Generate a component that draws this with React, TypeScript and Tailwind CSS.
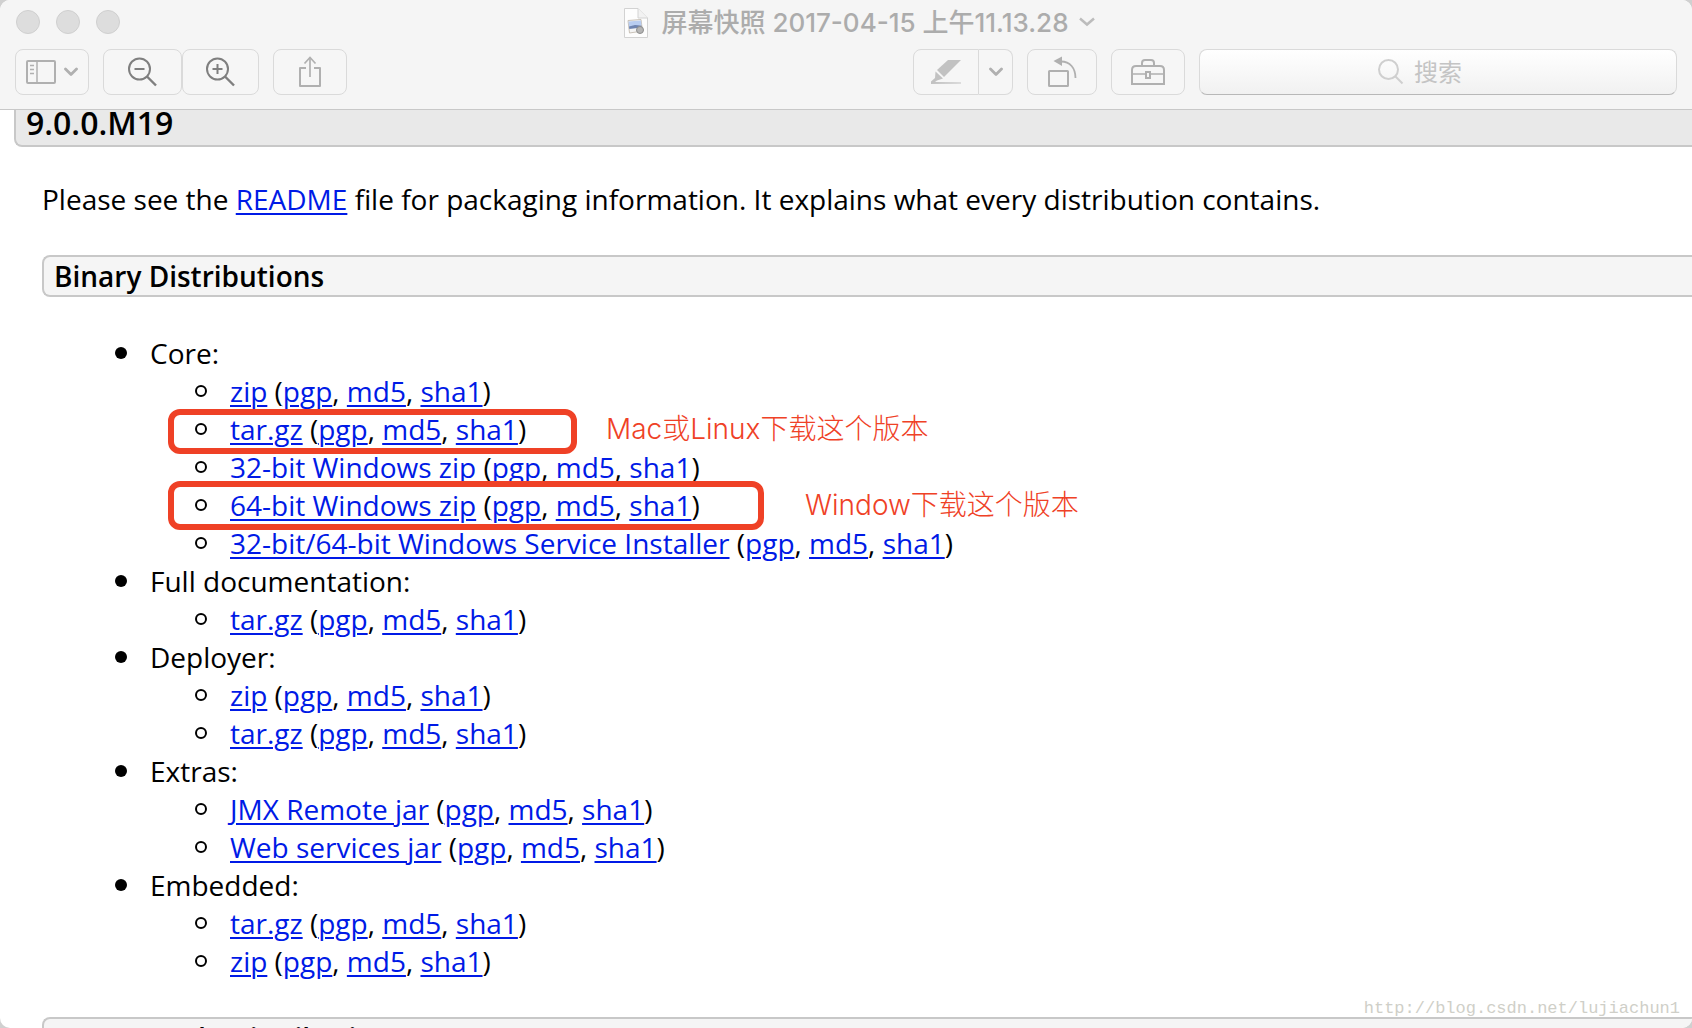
import type { ReactNode } from "react"
import clsx from "clsx"

const toolButtonClass = "flex h-[46px] items-center justify-center rounded-lg border border-[#dadada] bg-[#f6f6f6]"
const linkClass = "text-[#001ae6] underline decoration-2 underline-offset-[3px]"
const noteClass = "pointer-events-none absolute top-0 whitespace-nowrap font-['Inter','Noto_Sans_CJK_SC',sans-serif] font-light text-[#ef4126]"
const frameClass = "pointer-events-none absolute -left-[27px] rounded-xl border-6 border-[#ef4126]"

interface Download {
    name: string
    frame?: string
    note?: string
    notePosition?: string
}

interface Group {
    title: string
    downloads: Download[]
}

const groups: Group[] = [
    {
        title: "Core:",
        downloads: [
            { name: "zip" },
            { name: "tar.gz", frame: "-top-px h-[45px] w-[409px]", note: "Mac或Linux下载这个版本", notePosition: "left-[411px]" },
            { name: "32-bit Windows zip" },
            { name: "64-bit Windows zip", frame: "-top-[5px] h-[49px] w-[596px]", note: "Window下载这个版本", notePosition: "left-[610px]" },
            { name: "32-bit/64-bit Windows Service Installer" },
        ],
    },
    { title: "Full documentation:", downloads: [{ name: "tar.gz" }] },
    { title: "Deployer:", downloads: [{ name: "zip" }, { name: "tar.gz" }] },
    { title: "Extras:", downloads: [{ name: "JMX Remote jar" }, { name: "Web services jar" }] },
    { title: "Embedded:", downloads: [{ name: "tar.gz" }, { name: "zip" }] },
]

const Link = ({ children }: { children: ReactNode }) => (
    <a href="#" className={linkClass}>{children}</a>
)

const DownloadItem = ({ name, frame, note, notePosition }: Download) => (
    <li className="relative flex gap-[23px]">
        <span className="mt-[13px] size-3 shrink-0 rounded-full border-2 border-black" />
        <span className="whitespace-nowrap">
            <Link>{name}</Link> (<Link>pgp</Link>, <Link>md5</Link>, <Link>sha1</Link>)
        </span>
        {frame && <span className={clsx(frameClass, frame)} />}
        {note && <span className={clsx(noteClass, notePosition)}>{note}</span>}
    </li>
)

const SectionHeading = ({ children }: { children: ReactNode }) => (
    <h2 className="rounded-l-lg border-2 border-r-0 border-[#c8c8c8] bg-[#f5f5f5] pl-2.5 font-semibold">
        {children}
    </h2>
)

const DocumentIcon = () => (
    <svg width="26" height="32" viewBox="0 0 26 32" fill="none">
        <path d="M1.5 1.5H15L24.500 11V30.500H1.500Z" fill="#fdfdfd" stroke="#d2d2d2" />
        <path d="M15 1.500V11H24.500" fill="#f2f2f2" stroke="#d2d2d2" />
        <path d="M5 13.500 18 12.500 19.500 24 6.500 26Z" fill="#f4f4f4" stroke="#c9c2b8" />
        <path d="M5.500 14.500 18 13.500 18.500 18 6 20.500Z" fill="#b9cdf0" />
        <path d="M6 19.500 12 18 18.500 18.500 18.800 20.500 6.300 22Z" fill="#6f84b0" />
        <circle cx="17" cy="23" r="3.500" fill="#b5b5b5" stroke="#8d8d8d" />
    </svg>
)

const Chevron = () => (
    <svg width="14" height="10" viewBox="0 0 14 10" fill="none" stroke="#b0b0b0" strokeWidth="2.800" strokeLinecap="round" strokeLinejoin="round">
        <path d="M1.500 2 7 7.500 12.500 2" />
    </svg>
)

const SidebarIcon = () => (
    <svg width="30" height="24" viewBox="0 0 30 24" fill="none" stroke="#b0b0b0" strokeWidth="2">
        <rect x="1" y="1" width="28" height="22" rx="1" />
        <path d="M11 1V23" strokeWidth="1.500" />
        <path d="M4 5.500H8M4 9.500H8M4 13.500H8" strokeWidth="1.500" />
    </svg>
)

const ZoomIcon = ({ plus = false }: { plus?: boolean }) => (
    <svg width="30" height="30" viewBox="0 0 30 30" fill="none" stroke="#7f7f7f" strokeWidth="2">
        <circle cx="11.500" cy="12" r="10.500" />
        <path d="M19 19.500 28 28.500" strokeWidth="2.400" />
        <path d="M6.500 12H16.500" />
        {plus && <path d="M11.500 7V17" />}
    </svg>
)

const ShareIcon = () => (
    <svg width="22" height="32" viewBox="0 0 22 32" fill="none" stroke="#b0b0b0" strokeWidth="2">
        <path d="M7 12H1V30H21V12H15" strokeLinejoin="round" />
        <path d="M11 21V2" strokeWidth="1.700" />
        <path d="M5.500 7.500 11 1.500 16.500 7.500" strokeWidth="1.700" />
    </svg>
)

const MarkerIcon = () => (
    <svg width="30" height="24" viewBox="0 0 30 24" fill="#c2c2c2">
        <path d="M17 0H30L13 17 6 10Z" />
        <path d="M4.500 11.500 12 18.500 6 20.500 4 22 30 22.500V23.500L0 24V21.500L4 18Z" />
    </svg>
)

const RotateIcon = () => (
    <svg width="29" height="32" viewBox="0 0 29 32" fill="none" stroke="#b0b0b0" strokeWidth="2">
        <rect x="1" y="15" width="19" height="15" rx="0.500" />
        <path d="M13 5.500C22 5.500 27.500 12 27.500 22" strokeWidth="1.800" />
        <path d="M5.500 5 14 0.500V10Z" fill="#b0b0b0" stroke="none" />
    </svg>
)

const ToolboxIcon = () => (
    <svg width="34" height="26" viewBox="0 0 34 26" fill="none" stroke="#b0b0b0" strokeWidth="2">
        <path d="M1 25V11Q1 7 5 7H29Q33 7 33 11V25Z" />
        <path d="M11 7V4Q11 1 14 1H20Q23 1 23 4V7" />
        <path d="M1 15H14M20 15H33" strokeWidth="1.600" />
        <rect x="15" y="13" width="4" height="6" />
    </svg>
)

const SearchIcon = () => (
    <svg width="26" height="26" viewBox="0 0 26 26" fill="none" stroke="#cfcfcf" strokeWidth="2">
        <circle cx="10.500" cy="10.500" r="9.500" />
        <path d="M17.500 17.500 24.500 24.500" />
    </svg>
)

const TitleBar = () => (
    <div className="grid h-11 grid-cols-[1fr_auto_1fr] items-center px-4">
        <div className="flex gap-4">
            {["Close", "Minimize", "Zoom"].map(label => (
                <button key={label} aria-label={label} className="size-6 rounded-full border border-[#cfcfcf] bg-[#dddddd]" />
            ))}
        </div>
        <h1 className="flex items-center gap-3 pt-0.5 text-[26px] leading-8 font-medium text-[#acacac]">
            <DocumentIcon />
            屏幕快照 2017-04-15 上午11.13.28
        </h1>
        <div className="pl-2.5">
            <svg width="16" height="10" viewBox="0 0 16 10" fill="none" stroke="#bcbcbc" strokeWidth="2.500">
                <path d="M1 1.500 8 7.500 15 1.500" />
            </svg>
        </div>
    </div>
)

const Toolbar = () => (
    <div className="flex gap-3.5 px-[15px] pt-[5px] pb-3.5">
        <button aria-label="Sidebar" className={clsx(toolButtonClass, "w-[74px] gap-2")}>
            <SidebarIcon />
            <Chevron />
        </button>
        <div className="flex">
            <button aria-label="Zoom out" className={clsx(toolButtonClass, "w-[79px]")}><ZoomIcon /></button>
            <button aria-label="Zoom in" className={clsx(toolButtonClass, "w-[77px]")}><ZoomIcon plus /></button>
        </div>
        <button aria-label="Share" className={clsx(toolButtonClass, "w-[74px]")}><ShareIcon /></button>

        <div className="ml-auto flex">
            <button aria-label="Highlight" className={clsx(toolButtonClass, "w-[66px] rounded-r-none")}><MarkerIcon /></button>
            <button aria-label="Highlight colour" className={clsx(toolButtonClass, "w-[34px] rounded-l-none border-l-0")}><Chevron /></button>
        </div>
        <button aria-label="Rotate" className={clsx(toolButtonClass, "w-[70px]")}><RotateIcon /></button>
        <button aria-label="Markup" className={clsx(toolButtonClass, "w-[74px]")}><ToolboxIcon /></button>
        <label className="flex h-[46px] basis-[478px] items-center justify-center gap-2.5 rounded-lg border border-[#dadada] border-b-[#b8b8b8] bg-linear-to-b from-white to-[#f1f1f1]">
            <SearchIcon />
            <input
                type="search"
                aria-label="搜索"
                placeholder="搜索"
                className="w-[84px] bg-transparent pt-0.5 text-2xl text-[#555555] outline-none placeholder:text-[#c4c4c4]"
            />
        </label>
    </div>
)

export default function App() {
    return (
        <div className="h-screen bg-[#d0d0d0]">
            <div className="relative flex h-full flex-col overflow-hidden rounded-[10px] bg-white">
                <header className="shrink-0 border-b border-[#c8c8c8] bg-[#f5f5f5] font-['Inter','Noto_Sans_CJK_SC',sans-serif]">
                    <TitleBar />
                    <Toolbar />
                </header>

                <main className="min-h-0 flex-1 overflow-hidden pl-3.5 font-['Open_Sans',sans-serif] text-[28px] leading-[38px] text-black">
                    <h2 className="rounded-bl-lg border-b-2 border-l-2 border-[#c8c8c8] bg-[#e9e9e9] pb-[9px] pl-2.5 text-[32px] leading-[26px] font-semibold">
                        9.0.0.M19
                    </h2>
                    <div className="pl-7">
                        <p className="mt-[33px] mb-[37px]">
                            Please see the <Link>README</Link> file for packaging information. It explains what every distribution contains.
                        </p>
                        <SectionHeading>Binary Distributions</SectionHeading>
                        <ul className="my-[37px] pl-[73px]">
                            {groups.map(({ title, downloads }) => (
                                <li key={title} className="flex gap-[23px]">
                                    <span className="mt-[13px] size-3 shrink-0 rounded-full bg-black" />
                                    <div>
                                        {title}
                                        <ul className="pl-[45px]">
                                            {downloads.map(download => (
                                                <DownloadItem key={download.name} {...download} />
                                            ))}
                                        </ul>
                                    </div>
                                </li>
                            ))}
                        </ul>
                        <SectionHeading>Source Code Distributions</SectionHeading>
                    </div>
                </main>

                <div className="pointer-events-none absolute right-3 bottom-[7px] font-['Liberation_Mono',monospace] text-[17px] leading-6 text-[#cfcfc8]">
                    http://blog.csdn.net/lujiachun1
                </div>
            </div>
        </div>
    )
}
